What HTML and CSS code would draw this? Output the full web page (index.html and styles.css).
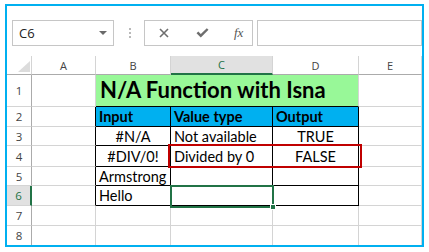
FILE: index.html
```html
<!DOCTYPE html>
<html>
<head>
<meta charset="utf-8">
<link rel="stylesheet" href="styles.css">
</head>
<body>
<div class="frame">
  <div class="toolbar">
    <div class="namebox">
      <span class="nb-text">C6</span>
      <svg class="nb-arrow" width="8" height="4" viewBox="0 0 8 4"><path d="M0 0H8L4 4Z" fill="#6a6a6a"/></svg>
    </div>
    <div class="sep">
      <svg width="2" height="10" viewBox="0 0 2 10"><rect x="0" y="0" width="2" height="2" fill="#b9b9b9"/><rect x="0" y="4" width="2" height="2" fill="#b9b9b9"/><rect x="0" y="8" width="2" height="2" fill="#b9b9b9"/></svg>
    </div>
    <div class="fbtns">
      <svg class="ic-x" width="10" height="10" viewBox="0 0 10 10"><path d="M1 1L9 9M9 1L1 9" stroke="#6e6e6e" stroke-width="1.6" fill="none"/></svg>
      <svg class="ic-ok" width="13" height="10" viewBox="0 0 13 10"><path d="M0.5 5.2L2.3 3.6L4.8 6L10.8 0.2L12.5 1.8L4.8 9.4Z" fill="#6e6e6e"/></svg>
      <span class="ic-fx">fx</span>
    </div>
    <div class="finput"></div>
  </div>
  <div class="sheet">
    <div class="corner"><svg width="12" height="11" viewBox="0 0 12 11"><path d="M12 0V11H0Z" fill="#dcdcdc"/></svg></div>
    <div class="ch">A</div>
    <div class="ch">B</div>
    <div class="ch sel">C</div>
    <div class="ch">D</div>
    <div class="ch">E</div>

    <div class="rh">1</div>
    <div class="c"></div>
    <div class="c title">N/A Function with Isna</div>
    <div class="c"></div>

    <div class="rh">2</div>
    <div class="c tl"></div>
    <div class="c t hd">Input</div>
    <div class="c t hd">Value type</div>
    <div class="c t hd">Output</div>
    <div class="c"></div>

    <div class="rh">3</div>
    <div class="c tl"></div>
    <div class="c t ctr">#N/A</div>
    <div class="c t">Not available</div>
    <div class="c t ctr">TRUE</div>
    <div class="c"></div>

    <div class="rh">4</div>
    <div class="c tl"></div>
    <div class="c t ctr">#DIV/0!</div>
    <div class="c t">Divided by 0</div>
    <div class="c t ctr">FALSE</div>
    <div class="c"></div>

    <div class="rh">5</div>
    <div class="c tl"></div>
    <div class="c t">Armstrong</div>
    <div class="c t"></div>
    <div class="c t"></div>
    <div class="c"></div>

    <div class="rh rsel">6</div>
    <div class="c tl"></div>
    <div class="c t">Hello</div>
    <div class="c t"></div>
    <div class="c t"></div>
    <div class="c"></div>

    <div class="rh">7</div>
    <div class="c"></div>
    <div class="c"></div>
    <div class="c"></div>
    <div class="c"></div>
    <div class="c"></div>

    <div class="rh">8</div>
    <div class="c"></div>
    <div class="c"></div>
    <div class="c"></div>
    <div class="c"></div>
    <div class="c"></div>

    <div class="redbox"></div>
    <div class="selbox"><span class="handle"></span></div>
  </div>
</div>
</body>
</html>
```
FILE: styles.css
```css
* { box-sizing: border-box; }
html, body { margin: 0; padding: 0; background: #fff; }
body { width: 429px; height: 252px; overflow: hidden; }

.frame {
  margin: 4px 0 0 5px;
  width: 419px;
  height: 243px;
  border: 2px solid #00b0f0;
  overflow: hidden;
  display: flex;
  flex-direction: column;
}

.toolbar {
  height: 50px;
  flex: none;
  display: flex;
  align-items: flex-start;
  padding: 14px 0 0 5px;
}
.namebox {
  width: 102px;
  height: 26px;
  border: 1px solid #c6c6c6;
  display: flex;
  align-items: center;
  justify-content: space-between;
  padding: 0 6px 0 6px;
}
.nb-text {
  font-family: "Open Sans", "Noto Sans", sans-serif;
  font-size: 13px;
  color: #222;
}
.sep {
  width: 30px;
  height: 26px;
  display: flex;
  align-items: center;
  justify-content: center;
  padding-left: 1px;
}
.sep svg { display: block; }
.fbtns {
  width: 109px;
  height: 26px;
  border: 1px solid #c6c6c6;
  display: flex;
  align-items: center;
  padding-left: 14px;
}
.ic-x { display: block; margin-right: 27px; }
.ic-ok { display: block; margin-right: 25px; }
.ic-fx {
  font-family: "Liberation Serif", serif;
  font-style: italic;
  font-size: 13px;
  color: #555;
}
.finput {
  flex: 1;
  height: 26px;
  margin-left: 4px;
  border: 1px solid #c6c6c6;
}

.sheet {
  position: relative;
  display: grid;
  grid-template-columns: 25px 64px 75px 102px 86px 63px;
  grid-template-rows: 19px 32px 20px 19px 21px 19px 20px 20px 20px;
}

.corner {
  border-right: 1px solid #d4d4d4;
  border-bottom: 1px solid #ababab;
  display: flex;
  align-items: flex-end;
  justify-content: flex-end;
  padding: 0 1px 2px 0;
}
.corner svg { display: block; }
.ch {
  font-family: "Open Sans", "Noto Sans", sans-serif;
  font-size: 11px;
  color: #444;
  display: flex;
  align-items: center;
  justify-content: center;
  border-right: 1px solid #d4d4d4;
  border-bottom: 1px solid #ababab;
}
.ch.sel {
  background: #e1e1e1;
  border-bottom: 2px solid #217346;
  color: #217346;
}
.rh {
  font-family: "Open Sans", "Noto Sans", sans-serif;
  font-size: 11.5px;
  color: #444;
  display: flex;
  align-items: center;
  justify-content: center;
  border-right: 1px solid #ababab;
  border-bottom: 1px solid #d4d4d4;
}
.rh.rsel {
  background: #e1e1e1;
  border-right: 2px solid #217346;
  color: #217346;
}

.c {
  font-family: "Lato", "Open Sans", sans-serif;
  font-size: 14.5px;
  color: #000;
  border-right: 1px solid #d4d4d4;
  border-bottom: 1px solid #d4d4d4;
  display: flex;
  align-items: center;
  padding: 0 0 0 3px;
  white-space: nowrap;
}
.c.tl { border-right-color: #000; }
.c.t {
  border-right-color: #000;
  border-bottom-color: #000;
}
.c.ctr { justify-content: center; padding: 0; }
.c.hd {
  background: #00b0f0;
  font-weight: bold;
}
.c.title {
  grid-column: span 3;
  background: #98f898;
  font-weight: bold;
  font-size: 22px;
  border-bottom-color: #000;
  align-items: flex-end;
  padding: 0 0 3px 4px;
}

.redbox {
  position: absolute;
  left: 161px;
  top: 88px;
  width: 194px;
  height: 24px;
  border: 2px solid #c00000;
}
.selbox {
  position: absolute;
  left: 163px;
  top: 129px;
  width: 104px;
  height: 23px;
  border: 2px solid #217346;
}
.handle {
  position: absolute;
  right: -4px;
  bottom: -4px;
  width: 6px;
  height: 6px;
  background: #217346;
  border: 1px solid #fff;
}
```
